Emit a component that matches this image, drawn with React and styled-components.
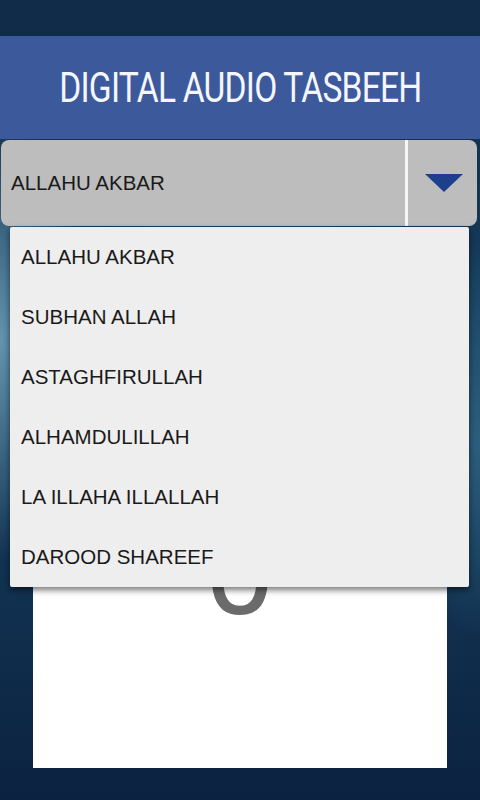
import React from "react";
import styled, { createGlobalStyle } from "styled-components";

const Global = createGlobalStyle`
  html, body { margin: 0; padding: 0; }
  body {
    width: 480px;
    height: 800px;
    overflow: hidden;
    font-family: "Liberation Sans", Arial, sans-serif;
  }
`;

const Screen = styled.div`
  position: relative;
  width: 480px;
  height: 800px;
  display: flex;
  flex-direction: column;
  background:
    radial-gradient(ellipse 90px 220px at 0px 340px, rgba(120,170,195,0.8), rgba(120,170,195,0) 100%),
    radial-gradient(ellipse 80px 200px at 480px 440px, rgba(60,120,150,0.6), rgba(60,120,150,0) 100%),
    radial-gradient(ellipse 260px 260px at 240px 420px, rgba(40,95,130,0.6), rgba(40,95,130,0) 100%),
    linear-gradient(180deg, #0f2b47 0%, #163d5c 40%, #123352 70%, #0b2240 100%);
`;

const StatusBar = styled.div`
  height: 36px;
  background: #102c48;
  flex: none;
`;

const Header = styled.header`
  height: 103px;
  background: #3c599c;
  display: flex;
  align-items: center;
  justify-content: center;
  flex: none;
`;

const Title = styled.h1`
  margin: 0;
  color: #f4f6fb;
  font-family: Roboto, "Liberation Sans", sans-serif;
  font-weight: 400;
  font-size: 42px;
  letter-spacing: -1px;
  transform: scaleX(0.8);
  white-space: nowrap;
`;

const Body = styled.div`
  position: relative;
  flex: 1;
  display: flex;
  flex-direction: column;
`;

const Spinner = styled.div`
  margin: 1px 3px 0 1px;
  height: 86px;
  background: #bdbdbd;
  border-radius: 8px;
  display: flex;
  align-items: stretch;
  flex: none;
`;

const Selected = styled.div`
  flex: 1;
  display: flex;
  align-items: center;
  padding-left: 10px;
  font-size: 20.5px;
  color: #1a1a1a;
  border-right: 3px solid #f5f5f5;
`;

const ArrowBox = styled.div`
  width: 67px;
  display: flex;
  align-items: center;
  justify-content: center;
  padding-left: 2px;
`;

const Card = styled.div`
  margin: 270px 33px 32px 33px;
  flex: 1;
  background: #ffffff;
  display: flex;
  justify-content: center;
  align-items: flex-start;
  overflow: hidden;
`;

const Count = styled.div`
  font-family: Roboto, "Liberation Sans", sans-serif;
  font-size: 125px;
  line-height: 1;
  color: #6b6b6b;
  margin-top: 13px;
`;

const Menu = styled.ul`
  position: absolute;
  top: 88px;
  left: 10px;
  width: 459px;
  margin: 0;
  padding: 0;
  list-style: none;
  background: #eeeeee;
  box-shadow: 0 3px 6px rgba(0, 0, 0, 0.55);
  border-radius: 2px;
`;

const Item = styled.li`
  height: 60px;
  display: flex;
  align-items: center;
  padding-left: 11px;
  font-size: 20.5px;
  color: #1a1a1a;
`;

const items = [
  "ALLAHU AKBAR",
  "SUBHAN ALLAH",
  "ASTAGHFIRULLAH",
  "ALHAMDULILLAH",
  "LA ILLAHA ILLALLAH",
  "DAROOD SHAREEF",
];

export default function App() {
  return (
    <>
      <Global />
      <Screen>
        <StatusBar />
        <Header>
          <Title>DIGITAL AUDIO TASBEEH</Title>
        </Header>
        <Body>
          <Spinner>
            <Selected>ALLAHU AKBAR</Selected>
            <ArrowBox>
              <svg width="38" height="18" viewBox="0 0 38 18">
                <polygon points="0,0 38,0 19,18" fill="#1e3f8e" />
              </svg>
            </ArrowBox>
          </Spinner>
          <Card>
            <Count>0</Count>
          </Card>
          <Menu>
            {items.map((t) => (
              <Item key={t}>{t}</Item>
            ))}
          </Menu>
        </Body>
      </Screen>
    </>
  );
}
